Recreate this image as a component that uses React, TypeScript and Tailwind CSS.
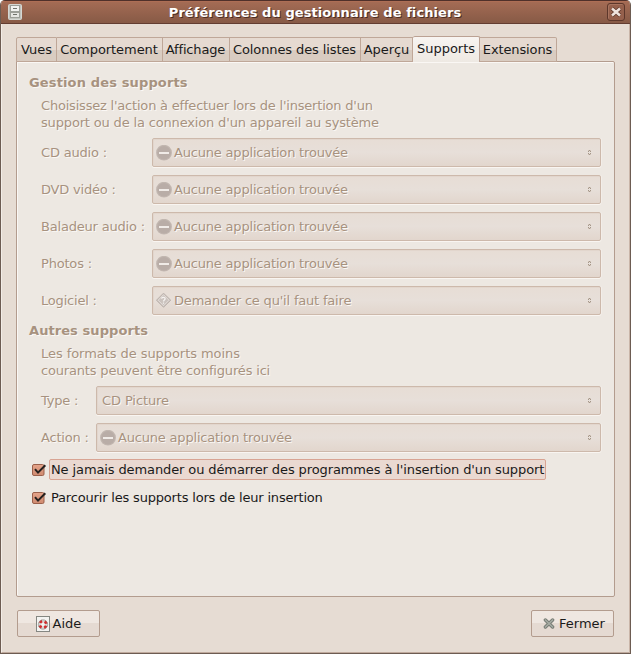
import React from "react";

const TABS = [
  { label: "Vues", box: "w-[41px]" },
  { label: "Comportement", box: "w-[106px] tracking-[-0.06px] pr-px" },
  { label: "Affichage", box: "w-[67px] tracking-[-0.15px] pr-px" },
  { label: "Colonnes des listes", box: "w-[131px] tracking-[-0.1px] pr-px" },
  { label: "Aperçu", box: "w-[52px]" },
  { label: "Supports", box: "w-[67px]", active: true },
  { label: "Extensions", box: "w-[77px] tracking-[-0.12px] pr-px" },
];

function NoneIcon() {
  return (
    <svg className="h-4 w-4 shrink-0" viewBox="0 0 16 16">
      <circle cx="8" cy="7.7" r="7.9" fill="#c2b7b0" />
      <circle cx="8" cy="7.7" r="6.8" fill="#b9ada7" />
      <rect x="3" y="7" width="10" height="2" fill="#f0ebe7" />
    </svg>
  );
}

function AskIcon() {
  return (
    <svg className="h-4 w-4 shrink-0" viewBox="0 0 16 16">
      <path d="M7.5 .2 14.7 7.2 7.5 14.2 .5 7.2Z" fill="#cbc3be" stroke="#b8aea8" strokeWidth="1" />
      <path d="M7.5 1.7 13 7.2 7.5 12.7 2.2 7.2Z" fill="none" stroke="#e8e2de" strokeWidth=".8" />
      <path d="M5.6 5.6C5.7 3.9 9.3 4 9.1 5.9 9 7 7.5 7 7.5 8.4M7.5 9.4v1.4" fill="none" stroke="#f6f3f1" strokeWidth="1.3" />
    </svg>
  );
}

function Arrows() {
  return (
    <svg className="h-[7px] w-[5px] shrink-0" viewBox="0 0 5 7">
      <path d="M2 1h1v1H2zM1 2h1v1H1zM3 2h1v1H3zM1 4h1v1H1zM3 4h1v1H3zM2 5h1v1H2z" fill="#a69788" />
      <path d="M1 1h1v1H1zM3 1h1v1H3zM1 5h1v1H1zM3 5h1v1H3z" fill="#d0c4ba" />
    </svg>
  );
}

function Combo({ icon, text }: { icon?: "none" | "ask"; text: string }) {
  return (
    <div className="flex h-[29px] flex-1 items-center rounded-[2px] border border-[#cdb9ab] bg-linear-to-b from-[#e7ddd5] via-[#e7dfd9] to-[#e2d6cd] pr-[8px] pl-[3px] shadow-[0_1px_0_#f9f5f1,1px_0_0_#f3eee9,inset_1px_1px_0_#e2d6cd]">
      {icon === "none" && <NoneIcon />}
      {icon === "ask" && <AskIcon />}
      <span
        className={
          "flex-1 whitespace-nowrap pl-[2px] text-[#a7927f] " + (icon ? "tracking-[-0.19px]" : "tracking-[-0.1px]")
        }
      >
        {text}
      </span>
      <Arrows />
    </div>
  );
}

function Row({ label, wide, icon, text }: { label: string; wide?: boolean; icon?: "none" | "ask"; text: string }) {
  return (
    <div className="flex h-[29px] items-center">
      <span
        className={
          "shrink-0 whitespace-nowrap tracking-[-0.19px] text-[#a7927f] " + (wide ? "w-[111px]" : "w-[55px]")
        }
      >
        {label}
      </span>
      <Combo icon={icon} text={text} />
    </div>
  );
}

function Check() {
  return (
    <svg className="h-[14px] w-[15px] shrink-0" viewBox="0 0 15 14">
      <defs>
        <linearGradient id="box" x2="0" y2="1">
          <stop stopColor="#e5a48a" />
          <stop offset="1" stopColor="#cf8a70" />
        </linearGradient>
      </defs>
      <rect x=".5" y="1.5" width="11.5" height="11" rx="1.5" fill="url(#box)" stroke="#9b604b" />
      <path d="M3 6.2 6 9.6 13.3 2.2" fill="none" stroke="#24201e" strokeWidth="2" />
    </svg>
  );
}

export default function App() {
  return (
    <div className="h-[654px] w-[631px] overflow-hidden bg-white text-[13px] leading-[17px] text-[#1a1a1a] [font-family:'DejaVu_Sans',sans-serif]">
      <div className="flex h-full flex-col overflow-hidden rounded-t-[5px] border-x border-b border-[#6d5c52] bg-[#e6dcd3]">
        <header className="flex h-[24px] shrink-0 items-center border-t border-b border-t-[#4f302a] border-b-[#633d31] bg-linear-to-b from-[#a56c55] to-[#875a46] pr-[5px] pl-[7px] shadow-[inset_0_1px_0_#ad6e55]">
          <svg className="h-4 w-[14px]" viewBox="0 0 14 16">
            <rect x=".5" y=".5" width="13" height="15" rx="1" fill="#c0c3be" stroke="#d5d7d3" />
            <rect x="2.5" y="1.5" width="9" height="6" fill="#f1f2f0" stroke="#9c9f99" />
            <rect x="2.5" y="8.5" width="9" height="5" fill="#e5e6e3" stroke="#9c9f99" />
            <path d="M5 4.5h4M5 10.5h4" fill="none" stroke="#70736d" />
          </svg>
          <h1 className="flex-1 pl-px text-center text-[13px] font-bold tracking-[0.07px] whitespace-nowrap text-white [text-shadow:1px_1px_0_#4c2c22]">
            Préférences du gestionnaire de fichiers
          </h1>
          <span className="flex h-[18px] w-[18px] items-center justify-center rounded-[3px] border border-[#5d372b] bg-[#95604c] shadow-[inset_1px_1px_0_#a8745f]">
            <svg className="h-[12px] w-[12px]" viewBox="0 0 12 12">
              <path d="M2 2.5 10 9.5M10 2.5 2 9.5" stroke="#5f3a2e" strokeWidth="4.2" />
              <path d="M2 2.5 10 9.5M10 2.5 2 9.5" stroke="#efe3dd" strokeWidth="2.5" />
            </svg>
          </span>
        </header>

        <main className="flex flex-1 flex-col border-x border-b border-l-[#f3ede7] border-r-[#c9b5a8] border-b-[#c0aa9d] pt-[12px] pr-[14px] pb-[15px] pl-[14px]">
          <nav className="relative z-10 -mb-px flex h-[26px] shrink-0 items-end">
            {TABS.map((t) => (
              <div
                key={t.label}
                className={
                  "flex items-center justify-center whitespace-nowrap border-t border-r " +
                  t.box +
                  (t.active
                    ? " h-[26px] rounded-t-[2px] border-[#bba193] bg-linear-to-b from-[#f8f4f1] to-[#eee9e3] pb-[2px]"
                    : " h-[25px] border-b border-[#bfa798] bg-linear-to-b from-[#e6dad1] from-50% to-[#d9ccc1] to-50% first:rounded-tl-[2px] first:border-l last:rounded-tr-[2px]")
                }
              >
                {t.label}
              </div>
            ))}
          </nav>

          <section className="flex h-[536px] shrink-0 flex-col rounded-b-[2px] rounded-tr-[2px] border border-[#b39c8e] bg-[#ede8e2] pt-[12px] pr-[13px] pl-[12px] shadow-[inset_1px_1px_0_#faf7f4]">
            <div className="flex flex-col text-[#a7927f] [text-shadow:1px_1px_0_#fbf8f5]">
              <h2 className="font-bold tracking-[0.14px]">Gestion des supports</h2>
              <div className="pl-[12px]">
                <p className="pt-[6px] whitespace-nowrap">
                  <span className="tracking-[-0.2px]">Choisissez l'action à effectuer lors de l'insertion d'un</span>
                  <br />
                  <span className="tracking-[-0.16px]">support ou de la connexion d'un appareil au système</span>
                </p>
                <div className="flex flex-col gap-2 pt-[7px]">
                  <Row wide label="CD audio :" icon="none" text="Aucune application trouvée" />
                  <Row wide label="DVD vidéo :" icon="none" text="Aucune application trouvée" />
                  <Row wide label="Baladeur audio :" icon="none" text="Aucune application trouvée" />
                  <Row wide label="Photos :" icon="none" text="Aucune application trouvée" />
                  <Row wide label="Logiciel :" icon="ask" text="Demander ce qu'il faut faire" />
                </div>
              </div>
              <h2 className="pt-[7px] font-bold tracking-[0.07px]">Autres supports</h2>
              <div className="pl-[12px]">
                <p className="pt-[6px] whitespace-nowrap">
                  <span className="tracking-[-0.06px]">Les formats de supports moins</span>
                  <br />
                  <span className="tracking-[-0.17px]">courants peuvent être configurés ici</span>
                </p>
                <div className="flex flex-col gap-2 pt-[7px]">
                  <Row label="Type :" text="CD Picture" />
                  <Row label="Action :" icon="none" text="Aucune application trouvée" />
                </div>
              </div>
            </div>
            <div className="flex flex-col gap-[7px] pt-[7px] pl-[3px]">
              <label className="flex h-[21px] items-center gap-[2px]">
                <Check />
                <span className="h-[21px] w-[497px] rounded-[2px] border border-[#d8a493] bg-[#ead9d1] pt-px pl-px tracking-[-0.11px] whitespace-nowrap">
                  Ne jamais demander ou démarrer des programmes à l'insertion d'un support
                </span>
              </label>
              <label className="flex h-[21px] items-center gap-[4px]">
                <Check />
                <span className="tracking-[-0.18px] whitespace-nowrap">Parcourir les supports lors de leur insertion</span>
              </label>
            </div>
          </section>

          <footer className="flex justify-between pt-[13px]">
            <button className="ml-px flex h-[27px] w-[83px] items-center justify-center gap-[3px] rounded-[2px] border border-[#b39c8e] bg-linear-to-b from-[#efe7e1] from-50% to-[#e5dad2] to-50%">
              <svg className="h-4 w-[14px]" viewBox="0 0 14 16">
                <rect x=".5" y=".5" width="13" height="15" fill="#f4f4f2" stroke="#858782" />
                <circle cx="7" cy="8.5" r="3.4" fill="none" stroke="#d5d5d2" strokeWidth="3" />
                <circle cx="7" cy="8.5" r="3.4" fill="none" stroke="#d22b2b" strokeWidth="2.8" strokeDasharray="2.67 2.67" strokeDashoffset="-1.33" />
                <circle cx="7" cy="8.5" r="4.7" fill="none" stroke="#8d8f8a" strokeWidth=".6" />
              </svg>
              Aide
            </button>
            <button className="mr-px flex h-[27px] w-[83px] items-center justify-center gap-[4px] rounded-[2px] border border-[#b39c8e] bg-linear-to-b from-[#efe7e1] from-50% to-[#e5dad2] to-50% pl-[3px]">
              <svg className="h-[12px] w-[12px]" viewBox="0 0 12 12">
                <path d="M2.4 2 9.6 9M9.6 2 2.4 9" stroke="#757a73" strokeWidth="3.4" strokeLinecap="round" />
                <path d="M2.4 2 9.6 9M9.6 2 2.4 9" stroke="#a5aaa2" strokeWidth="1.7" strokeLinecap="round" />
              </svg>
              Fermer
            </button>
          </footer>
        </main>
      </div>
    </div>
  );
}
